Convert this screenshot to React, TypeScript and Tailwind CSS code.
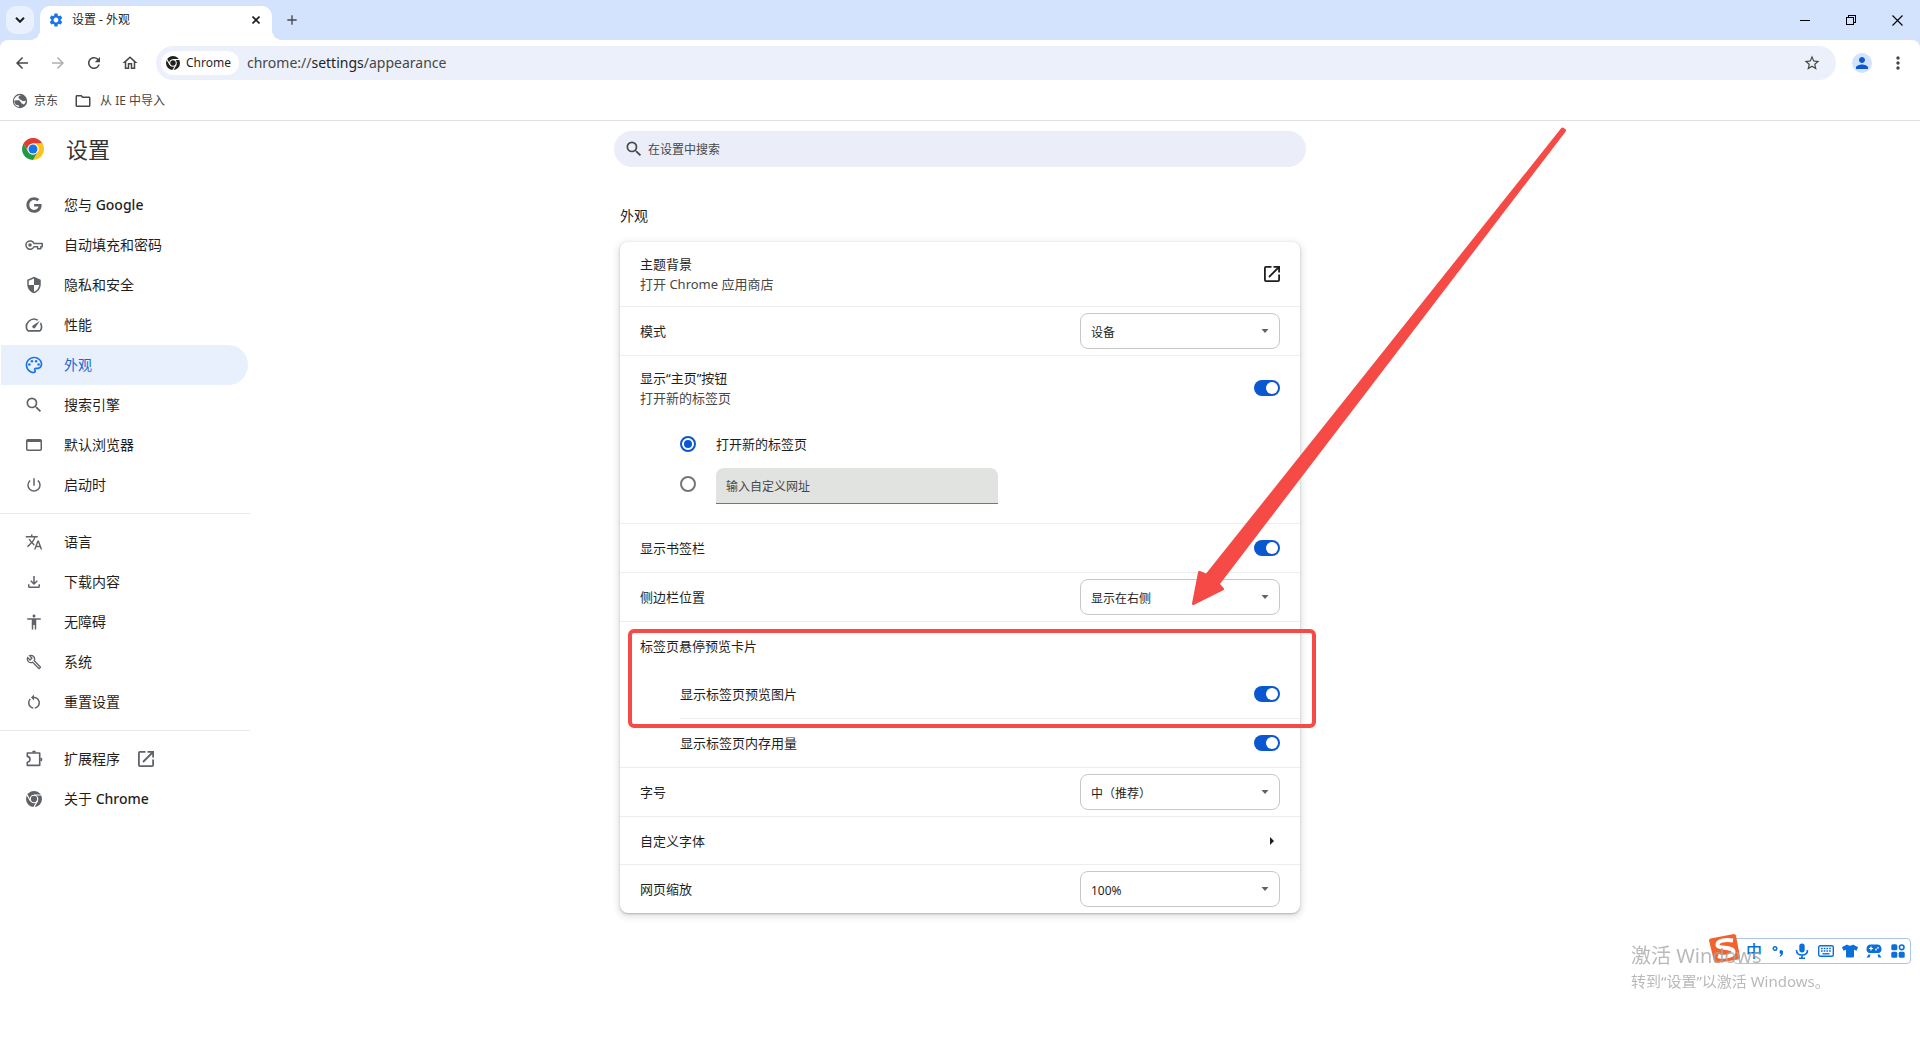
import { useState } from "react";
import type { ReactNode } from "react";
import clsx from "clsx";
import {
  MdAccessibility,
  MdArrowBack,
  MdArrowForward,
  MdMoreVert,
  MdOutlineBuild,
  MdOutlineFileDownload,
  MdOutlineFolder,
  MdOutlineHome,
  MdOutlinePalette,
  MdPowerSettingsNew,
  MdRefresh,
  MdRestartAlt,
  MdSearch,
  MdSecurity,
  MdSettings,
  MdSpeed,
  MdStarBorder,
  MdTranslate,
  MdAdd,
  MdPerson,
} from "react-icons/md";
import { FaGoogle, FaTshirt } from "react-icons/fa";

interface NavItem {
  id: string;
  label: ReactNode;
  icon: ReactNode;
  external?: boolean;
}

// Monochrome Chrome mark, takes the current text colour
function ChromeMark({ className }: { className?: string }) {
  return (
    <svg viewBox="0 0 24 24" className={className} aria-hidden="true">
      <circle cx="12" cy="12" r="12" fill="currentColor" />
      <g stroke="white" strokeWidth="1.8" fill="none">
        <path d="M12 6h11M6.8 15L1.3 5.5M17.2 15L11.7 24.5" />
        <circle cx="12" cy="12" r="5.6" />
      </g>
    </svg>
  );
}

function ChromeLogo() {
  return (
    <svg viewBox="0 0 24 24" className="size-[22px]" aria-hidden="true">
      <path fill="#e33b2e" d="M12 6H22.39A12 12 0 0 0 1.61 6L6.8 15A6 6 0 0 1 12 6z" />
      <path fill="#fcc41f" d="M12 6H22.39A12 12 0 0 1 12 24L17.2 15A6 6 0 0 0 12 6z" />
      <path fill="#229a43" d="M6.8 15L1.61 6A12 12 0 0 0 12 24L17.2 15A6 6 0 0 1 6.8 15z" />
      <circle cx="12" cy="12" r="6" fill="white" />
      <circle cx="12" cy="12" r="4.9" fill="#1a73e8" />
    </svg>
  );
}

function OpenIcon() {
  return (
    <svg viewBox="0 0 16 16" className="size-4" fill="none" stroke="currentColor" strokeWidth="1.8" aria-hidden="true">
      <path d="M7.5 .9H2Q.9.9.9 2v12q0 1.1 1.1 1.1h12q1.1 0 1.1-1.1V8.5" />
      <path d="M9.5 .9h5.6v5.6M15 1L5 11" />
    </svg>
  );
}

function PuzzleIcon() {
  return (
    <svg viewBox="0 0 20 20" className="size-5" fill="none" stroke="currentColor" strokeWidth="1.6" aria-hidden="true">
      <path d="M3.3 4h12.4v12.4H3.3v-3.2c3.6-.4 3.6-5.4 0-5.8z" strokeLinejoin="round" />
      <path d="M8 3.5a2 2 0 0 1 4 0zM16.4 8.5a2 2 0 0 1 0 4z" fill="currentColor" stroke="none" />
    </svg>
  );
}

function KeyIcon() {
  return (
    <svg viewBox="0 0 18 10" className="h-2.5 w-[18px]" fill="none" stroke="currentColor" strokeWidth="1.5" aria-hidden="true">
      <path d="M9 3.5h8.2v3.2h-1.400v2h-3.200v-2H9a4.200 4.200 0 1 1 0-3.2z" strokeLinejoin="round" />
      <circle cx="5" cy="5" r="1.800" fill="currentColor" stroke="none" />
    </svg>
  );
}

function BrowserIcon() {
  return (
    <svg viewBox="0 0 16 12" className="h-3 w-4" aria-hidden="true">
      <rect x=".75" y=".75" width="14.5" height="10.5" rx="1" fill="none" stroke="currentColor" strokeWidth="1.5" />
      <path d="M1 1h14v2H1z" fill="currentColor" />
    </svg>
  );
}

function GlobeIcon() {
  return (
    <svg viewBox="0 0 16 16" className="size-4 text-[#5f6368]" aria-hidden="true">
      <circle cx="8" cy="8" r="7.2" fill="currentColor" />
      <path fill="white" d="M9 2.3c-1.2 1-2.6 1-2.6 2.2 0 1 1 .8 1.2 1.6.2 1 1.700.4 2.200 1.500.3.8 1.300.5 2 .4 1.200 0 2-.6 2-.6-.2 1.700-1 3.300-2.300 4.200-.5-1.200-2-.6-2.200-1.900-.2-1.300-1.400-.8-1.700-1.900C7.300 6.900 5 7.500 2.300 7.400c0 3 1.700 4.300 2.400 4.600.8.300 1.600-.1 2 .6.3.600.2 1.200.6 1.300C3.900 13.700 2 11 2 8c0-3.400 3-6.200 7-5.700z" />
    </svg>
  );
}

const navGroups: NavItem[][] = [
  [
    { id: "people", label: <>您与 <span className="font-medium">Google</span></>, icon: <FaGoogle className="size-4" /> },
    { id: "autofill", label: "自动填充和密码", icon: <KeyIcon /> },
    { id: "privacy", label: "隐私和安全", icon: <MdSecurity className="size-[18px]" /> },
    { id: "performance", label: "性能", icon: <MdSpeed className="size-5" /> },
    { id: "appearance", label: "外观", icon: <MdOutlinePalette className="size-5" /> },
    { id: "search", label: "搜索引擎", icon: <MdSearch className="size-5" /> },
    { id: "defaultBrowser", label: "默认浏览器", icon: <BrowserIcon /> },
    { id: "onStartup", label: "启动时", icon: <MdPowerSettingsNew className="size-[18px]" /> },
  ],
  [
    { id: "languages", label: "语言", icon: <MdTranslate className="size-[18px]" /> },
    { id: "downloads", label: "下载内容", icon: <MdOutlineFileDownload className="size-[18px]" /> },
    { id: "accessibility", label: "无障碍", icon: <MdAccessibility className="size-[18px]" /> },
    { id: "system", label: "系统", icon: <MdOutlineBuild className="size-4" /> },
    { id: "reset", label: "重置设置", icon: <MdRestartAlt className="size-[18px]" /> },
  ],
  [
    { id: "extensions", label: "扩展程序", icon: <PuzzleIcon />, external: true },
    { id: "about", label: <>关于 <span className="font-medium">Chrome</span></>, icon: <ChromeMark className="size-4" /> },
  ],
];

function TitleBar() {
  return (
    <div className="flex h-10 items-center pl-1.5">
      <button aria-label="搜索标签页" className="flex size-7 items-center justify-center rounded-[10px] bg-[#e9f1fe] text-[#1f1f1f]">
        <svg viewBox="0 0 10 6" className="h-1.5 w-2.5" fill="none" stroke="currentColor" strokeWidth="2">
          <path d="M1 .8l4 4 4-4" />
        </svg>
      </button>
      <div className="relative ml-1.5 flex h-[34px] w-[232px] items-center gap-2 self-end rounded-t-[10px] bg-white px-2 pb-1.5">
        <span className="absolute bottom-0 -left-2.5 size-2.5 bg-[radial-gradient(circle_at_0_0,transparent_10px,white_10px)]" />
        <span className="absolute -right-2.5 bottom-0 size-2.5 bg-[radial-gradient(circle_at_100%_0,transparent_10px,white_10px)]" />
        <MdSettings className="size-4 text-[#1a73e8]" />
        <span className="flex-1 text-xs text-[#1f1f1f]">设置 - 外观</span>
        <button aria-label="关闭标签页" className="flex size-4 items-center justify-center text-[#1f1f1f]">
          <svg viewBox="0 0 8 8" className="size-2" stroke="currentColor" strokeWidth="1.6">
            <path d="M.5.5l7 7M7.5.5l-7 7" />
          </svg>
        </button>
      </div>
      <button aria-label="打开新的标签页" className="ml-1.5 flex size-7 items-center justify-center text-[#474747]">
        <MdAdd className="size-4" />
      </button>
      <div className="ml-auto flex text-black">
        <button aria-label="最小化" className="flex h-10 w-[46px] items-center justify-center">
          <span className="h-px w-2.5 bg-black" />
        </button>
        <button aria-label="向下还原" className="flex h-10 w-[46px] items-center justify-center">
          <svg viewBox="0 0 10 10" className="size-2.5" fill="none" stroke="currentColor" shapeRendering="crispEdges">
            <path d="M.5 2.5h7v7h-7zM2.5 2.5v-2h7v7h-2" />
          </svg>
        </button>
        <button aria-label="关闭" className="flex h-10 w-[46px] items-center justify-center">
          <svg viewBox="0 0 11 11" className="size-[11px]" stroke="currentColor" strokeWidth="1.1">
            <path d="M.5.5l10 10M10.5.5l-10 10" />
          </svg>
        </button>
      </div>
    </div>
  );
}

function ToolButton({ label, children, dim }: { label: string; children: ReactNode; dim?: boolean }) {
  return (
    <button
      aria-label={label}
      className={clsx("flex h-[34px] w-9 items-center justify-center", dim ? "text-[#b0b0b0]" : "text-[#474747]")}
    >
      {children}
    </button>
  );
}

function Toolbar() {
  return (
    <div className="flex h-10 items-start rounded-t-lg bg-white px-1 pt-1.5">
      <ToolButton label="返回"><MdArrowBack className="size-[18px]" /></ToolButton>
      <ToolButton label="前进" dim><MdArrowForward className="size-[18px]" /></ToolButton>
      <ToolButton label="重新加载"><MdRefresh className="size-[18px]" /></ToolButton>
      <ToolButton label="主页"><MdOutlineHome className="size-[18px]" /></ToolButton>
      <div className="mx-2 flex h-[34px] flex-1 items-center rounded-full bg-[#ecf0fa] px-[5px]">
        <button className="flex h-6 items-center gap-1.5 rounded-full bg-white pr-2 pl-[5px] text-xs text-[#1f1f1f]">
          <ChromeMark className="size-3.5" />
          Chrome
        </button>
        <div role="textbox" aria-label="地址栏" className="ml-2 flex-1 text-sm text-[#474747]">
          chrome://<span className="text-[#1f1f1f]">settings</span>/appearance
        </div>
        <button aria-label="为此标签页添加书签" className="mr-2.5 text-[#474747]">
          <MdStarBorder className="size-[18px]" />
        </button>
      </div>
      <ToolButton label="个人资料">
        <span className="flex size-5 items-center justify-center rounded-full bg-[#d3e3fd] text-[#0b57d0]">
          <MdPerson className="size-[18px]" />
        </span>
      </ToolButton>
      <ToolButton label="菜单"><MdMoreVert className="size-5" /></ToolButton>
    </div>
  );
}

function BookmarkBar() {
  return (
    <div className="flex h-[41px] items-center gap-4 border-b border-[#e0e0e0] bg-white px-3 pt-0.5 text-xs text-[#474747]">
      <a href="#jd" className="flex items-center gap-1.5"><GlobeIcon />京东</a>
      <a href="#ie" className="flex items-center gap-2"><MdOutlineFolder className="size-[18px]" />从 IE 中导入</a>
    </div>
  );
}

function Sidebar({ active, onSelect }: { active: string; onSelect: (id: string) => void }) {
  return (
    <aside className="w-[250px] shrink-0">
      <div className="flex h-14 items-center gap-[22px] pl-[22px]">
        <ChromeLogo />
        <h1 className="text-[22px] text-[#333333]">设置</h1>
      </div>
      <nav className="pt-2">
        {navGroups.map((group, i) => (
          <div key={i} className={clsx(i > 0 && "mt-2 border-t border-[#e8e8e8] pt-2")}>
            {group.map((item) => (
              <a
                key={item.id}
                href={`#${item.id}`}
                onClick={() => onSelect(item.id)}
                className={clsx(
                  "mr-0.5 ml-px flex h-10 items-center rounded-r-full pl-[23px] text-sm",
                  item.id === active ? "bg-[#e8f0fe] text-[#1967d2]" : "text-[#1f1f1f]"
                )}
              >
                <span className={clsx("mr-5 flex size-5 items-center justify-center", item.id === active ? "text-[#1a73e8]" : "text-[#5f6368]")}>
                  {item.icon}
                </span>
                <span>{item.label}</span>
                {item.external && <span className="ml-[18px] text-[#5f6368]"><OpenIcon /></span>}
              </a>
            ))}
          </div>
        ))}
      </nav>
    </aside>
  );
}

function Row({ children, last, nested }: { children: ReactNode; last?: boolean; nested?: boolean }) {
  return (
    <div
      className={clsx(
        "flex items-center justify-between pr-5",
        nested ? "ml-[60px]" : "pl-5",
        last ? "h-12" : "h-[49px] border-b border-[#ededed]"
      )}
    >
      {children}
    </div>
  );
}

function Toggle({ id }: { id: string }) {
  const [on, setOn] = useState(true);
  return (
    <input
      id={id}
      type="checkbox"
      role="switch"
      checked={on}
      onChange={() => setOn(!on)}
      className="flex h-4 w-[26px] appearance-none items-center rounded-full bg-[#747775] px-0.5 before:size-3 before:rounded-full before:bg-white checked:justify-end checked:bg-[#0b57d0]"
    />
  );
}

function Select({ id, options }: { id: string; options: string[] }) {
  return (
    <div className="relative w-[200px]">
      <select id={id} className="h-9 w-full appearance-none rounded-lg border border-[#c7c7c7] bg-white px-2.5 pt-1 text-xs text-[#1f1f1f]">
        {options.map((option) => (
          <option key={option}>{option}</option>
        ))}
      </select>
      <svg viewBox="0 0 8 4" className="pointer-events-none absolute top-4 right-[11px] h-1 w-2 fill-[#5f6368]">
        <path d="M.5 0h7L4 4z" />
      </svg>
    </div>
  );
}

function AppearanceCard() {
  const [home, setHome] = useState("ntp");

  return (
    <div className="relative rounded-lg bg-white text-[13px] leading-5 text-[#1f1f1f] shadow-[0_1px_2px_0_rgba(60,64,67,0.3),0_2px_6px_2px_rgba(60,64,67,0.15)]">
      <div className="flex items-center justify-between border-b border-[#ededed] px-5 py-3">
        <div>
          <div>主题背景</div>
          <div className="text-[#474747]">打开 Chrome 应用商店</div>
        </div>
        <a href="#theme" aria-label="打开 Chrome 应用商店"><OpenIcon /></a>
      </div>
      <Row>
        <label htmlFor="mode">模式</label>
        <Select id="mode" options={["设备", "浅色", "深色"]} />
      </Row>

      <div className="border-b border-[#ededed] pb-[19px]">
        <div className="flex items-center justify-between px-5 py-3">
          <label htmlFor="home">
            显示“主页”按钮
            <span className="block text-[#474747]">打开新的标签页</span>
          </label>
          <Toggle id="home" />
        </div>
        <div className="flex h-12 items-center gap-5 pl-[60px]">
          <input
            id="home-ntp"
            type="radio"
            name="home"
            checked={home === "ntp"}
            onChange={() => setHome("ntp")}
            className="flex size-4 appearance-none items-center justify-center rounded-full border-2 border-[#747775] before:size-2 before:rounded-full checked:border-[#0b57d0] checked:before:bg-[#0b57d0]"
          />
          <label htmlFor="home-ntp">打开新的标签页</label>
        </div>
        <div className="flex items-start gap-5 pl-[60px]">
          <input
            aria-label="输入自定义网址"
            type="radio"
            name="home"
            checked={home === "url"}
            onChange={() => setHome("url")}
            className="mt-2 flex size-4 appearance-none items-center justify-center rounded-full border-2 border-[#747775] before:size-2 before:rounded-full checked:border-[#0b57d0] checked:before:bg-[#0b57d0]"
          />
          <input
            aria-label="自定义网址"
            placeholder="输入自定义网址"
            className="h-9 w-[282px] rounded-t-lg border-b border-[#747775] bg-[#e1e3e1] px-2.5 pt-0.5 text-xs placeholder:text-[#474747]"
          />
        </div>
      </div>

      <Row>
        <label htmlFor="bookmarks">显示书签栏</label>
        <Toggle id="bookmarks" />
      </Row>
      <Row>
        <label htmlFor="side-panel">侧边栏位置</label>
        <Select id="side-panel" options={["显示在右侧", "显示在左侧"]} />
      </Row>

      <div className="relative">
        <div className="flex h-12 items-center px-5">标签页悬停预览卡片</div>
        <Row nested>
          <label htmlFor="hover-image">显示标签页预览图片</label>
          <Toggle id="hover-image" />
        </Row>
        <div className="pointer-events-none absolute top-[7px] -right-4 left-2 h-[99px] rounded-md border-4 border-[#f54a45]" />
      </div>
      <div className="border-b border-[#ededed]">
        <Row nested last>
          <label htmlFor="hover-memory">显示标签页内存用量</label>
          <Toggle id="hover-memory" />
        </Row>
      </div>

      <Row>
        <label htmlFor="font-size">字号</label>
        <Select id="font-size" options={["中（推荐）", "小", "大"]} />
      </Row>
      <button className="flex h-12 w-full items-center justify-between border-b border-[#ededed] px-5">
        自定义字体
        <svg viewBox="0 0 16 8" className="h-2 w-4 fill-[#1f1f1f]" aria-hidden="true">
          <path d="M6 0l4 4-4 4z" />
        </svg>
      </button>
      <Row last>
        <label htmlFor="zoom">网页缩放</label>
        <Select id="zoom" options={["100%", "125%", "150%"]} />
      </Row>

      {/* arrow pointing at the tab hover section */}
      <svg
        viewBox="0 0 390 500"
        className="pointer-events-none absolute -top-[122px] left-[570px] h-[500px] w-[390px] fill-[#f54a45] stroke-[#f54a45]"
        aria-hidden="true"
      >
        <path d="M372.5 9L374.5 10.5L28 464L32.5 469L3.5 483.500L9.500 452.500L16.500 455.500z" strokeWidth="3" strokeLinejoin="round" />
      </svg>
    </div>
  );
}

function ImeBar() {
  return (
    <div className="absolute top-1 right-0 flex h-[26px] items-center rounded-sm border border-[#a9c5e8] bg-white pl-2 text-[#0a6edb]">
      <svg viewBox="0 0 34 32" className="absolute -top-1.5 -left-[26px] h-8 w-[34px]" aria-hidden="true">
        <path d="M2.5 5.500L26 1q1.500 0 2 1.500L32 24q0 2-2 2.500L8.500 30q-2 0-2.500-2L1 7.500q0-1.500 1.500-2z" fill="#f2622f" />
        <path d="M25 7.500C17 6 9 8 9.500 12c.5 4 15.500 1.500 16 6.500.5 4.500-9 6.500-15.500 4.500" fill="none" stroke="white" strokeWidth="4" />
      </svg>
      <button className="w-6 text-base leading-6 font-medium">中</button>
      <button aria-label="标点" className="flex w-6 justify-center">
        <svg viewBox="0 0 12 12" className="size-3">
          <circle cx="3" cy="3.500" r="1.800" fill="none" stroke="currentColor" strokeWidth="1.400" />
          <path d="M7.500 7a1.800 1.800 0 1 1 3.500.5c0 2-1 3.500-3 4.200l-.5-.7c1-.6 1.500-1.200 1.400-2A1.700 1.700 0 0 1 7.500 7z" fill="currentColor" />
        </svg>
      </button>
      <button aria-label="语音" className="flex w-6 justify-center">
        <svg viewBox="0 0 14 16" className="h-4 w-3.5" fill="none" stroke="currentColor" strokeWidth="1.6">
          <rect x="4.300" y=".5" width="5.400" height="9" rx="2.700" fill="currentColor" stroke="none" />
          <path d="M1.500 7c0 3 2.200 5 5.500 5s5.500-2 5.500-5M7 12v3M4 15.200h6" />
        </svg>
      </button>
      <button aria-label="软键盘" className="flex w-6 justify-center">
        <svg viewBox="0 0 16 12" className="h-3 w-4" fill="none" stroke="currentColor" strokeWidth="1.4">
          <rect x=".7" y=".7" width="14.600" height="10.600" rx="1.500" />
          <path d="M3 3.500h10M3 6h10" strokeDasharray="1.700 1" strokeWidth="1.700" />
          <path d="M4.500 8.800h7" />
        </svg>
      </button>
      <button aria-label="皮肤" className="flex w-6 justify-center"><FaTshirt className="size-4" /></button>
      <button aria-label="游戏" className="flex w-6 justify-center">
        <svg viewBox="0 0 16 14" className="h-3.5 w-4" fill="currentColor">
          <path d="M5 .5h6c3 0 4.500 2 4.500 4.500S14 9 12.500 9h-9C2 9 .5 7.500.5 5S2 .5 5 .5z" />
          <path d="M5 2.500v4M3 4.500h4" stroke="white" strokeWidth="1.200" />
          <circle cx="10" cy="5.500" r=".9" fill="white" />
          <circle cx="12" cy="3.800" r=".9" fill="white" />
          <path d="M4.500 10.500H2.500L.5 13.500h3zM11.500 10.500h2l2 3h-3z" />
        </svg>
      </button>
      <button aria-label="工具箱" className="flex w-6 justify-center">
        <svg viewBox="0 0 14 14" className="size-3.5" fill="currentColor">
          <rect x=".3" y=".3" width="6" height="6" rx="1.500" />
          <circle cx="10.700" cy="3.300" r="2.300" fill="none" stroke="currentColor" strokeWidth="1.600" />
          <rect x=".3" y="7.700" width="6" height="6" rx="1.500" />
          <rect x="7.700" y="7.700" width="6" height="6" rx="1.500" />
        </svg>
      </button>
    </div>
  );
}

function App() {
  const [active, setActive] = useState("appearance");

  return (
    <div className="min-h-screen bg-white font-['Noto_Sans','Noto_Sans_CJK_SC',sans-serif]">
      <header className="bg-[#d3e3fd]">
        <TitleBar />
        <Toolbar />
        <BookmarkBar />
      </header>

      <div className="flex">
        <Sidebar active={active} onSelect={setActive} />
        <main className="flex-1">
          <div className="flex h-14 items-center justify-center">
            <label className="flex h-9 w-full max-w-[692px] items-center gap-1 rounded-full bg-[#ebeef8] pl-2.5 text-[#474747]">
              <MdSearch className="size-5" />
              <input aria-label="在设置中搜索" placeholder="在设置中搜索" className="flex-1 bg-transparent pt-0.5 text-xs outline-none placeholder:text-[#474747]" />
            </label>
          </div>
          <section className="mx-auto max-w-[680px] pt-7">
            <h2 className="mb-4 text-sm leading-[21px] text-[#1f1f1f]">外观</h2>
            <AppearanceCard />
          </section>
        </main>
        <div className="w-[250px] shrink-0" />
      </div>

      <div className="fixed right-[9px] bottom-[49px] w-[280px] pt-[7px]">
        <ImeBar />
        <div className="pointer-events-none relative text-[#a8a8a8]/80">
          <p className="text-xl leading-[30px]">激活 Windows</p>
          <p className="text-[15px] leading-5">转到“设置”以激活 Windows。</p>
        </div>
      </div>
    </div>
  );
}

export default App;
